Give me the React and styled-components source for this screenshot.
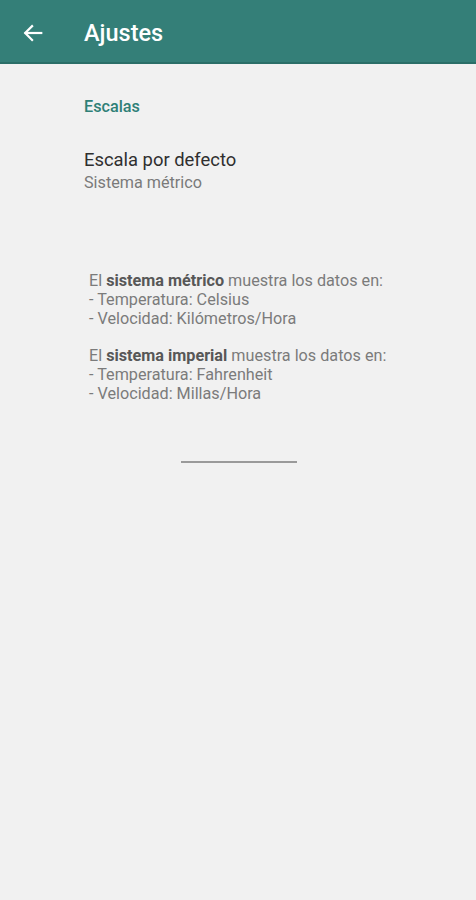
import React from "react";
import styled, { createGlobalStyle } from "styled-components";

const Global = createGlobalStyle`
  html, body { margin: 0; padding: 0; background: #f1f1f1; }
  body { font-family: Roboto, "Noto Sans", sans-serif; }
`;

const Page = styled.div`
  width: 476px;
  min-height: 900px;
  background: #f1f1f1;
`;

const AppBar = styled.header`
  height: 64px;
  background: #347f78;
  border-bottom: 2px solid #2b6e68;
  box-sizing: border-box;
  display: flex;
  align-items: center;
  padding-left: 22px;
`;

const BackButton = styled.div`
  width: 22px;
  height: 22px;
  display: flex;
  align-items: center;
  justify-content: center;
  margin-right: 40px;
  margin-top: 3px;
`;

const Title = styled.h1`
  margin: 0;
  color: #ffffff;
  font-size: 23.5px;
  font-weight: 500;
  margin-top: 4px;
`;

const Content = styled.div`
  padding: 0 0 0 84px;
`;

const SectionTitle = styled.div`
  color: #2f8077;
  font-size: 16.2px;
  font-weight: 500;
  padding-top: 32.5px;
  line-height: 20px;
`;

const PrefItem = styled.div`
  padding-top: 31px;
`;

const PrefTitle = styled.div`
  font-size: 18.4px;
  color: #2f2f2f;
  line-height: 24px;
`;

const PrefSummary = styled.div`
  font-size: 16.2px;
  color: #7a7a7a;
  line-height: 22px;
`;

const InfoBlock = styled.div`
  padding: 78.5px 0 0 89px;
  font-size: 16.2px;
  line-height: 18.8px;
  color: #7b7b7b;
`;

const Para = styled.p`
  margin: 0 0 18.8px 0;
`;

const Strong = styled.b`
  color: #575757;
  font-weight: 700;
`;

const Divider = styled.div`
  width: 116px;
  height: 2px;
  background: #9a9a9a;
  margin: 57px 0 0 181px;
`;

export default function App() {
  return (
    <Page>
      <Global />
      <AppBar>
        <BackButton>
          <svg width="22" height="22" viewBox="0 0 24 24" fill="none" stroke="#fff" strokeWidth="2.4" strokeLinecap="square">
            <path d="M21 12H4" />
            <path d="M11 4.5L3.5 12L11 19.5" strokeLinejoin="miter" />
          </svg>
        </BackButton>
        <Title>Ajustes</Title>
      </AppBar>
      <Content>
        <SectionTitle>Escalas</SectionTitle>
        <PrefItem>
          <PrefTitle>Escala por defecto</PrefTitle>
          <PrefSummary>Sistema métrico</PrefSummary>
        </PrefItem>
      </Content>
      <InfoBlock>
        <Para>
          El <Strong>sistema métrico</Strong> muestra los datos en:<br />
          - Temperatura: Celsius<br />
          - Velocidad: Kilómetros/Hora
        </Para>
        <Para>
          El <Strong>sistema imperial</Strong> muestra los datos en:<br />
          - Temperatura: Fahrenheit<br />
          - Velocidad: Millas/Hora
        </Para>
      </InfoBlock>
      <Divider />
    </Page>
  );
}
